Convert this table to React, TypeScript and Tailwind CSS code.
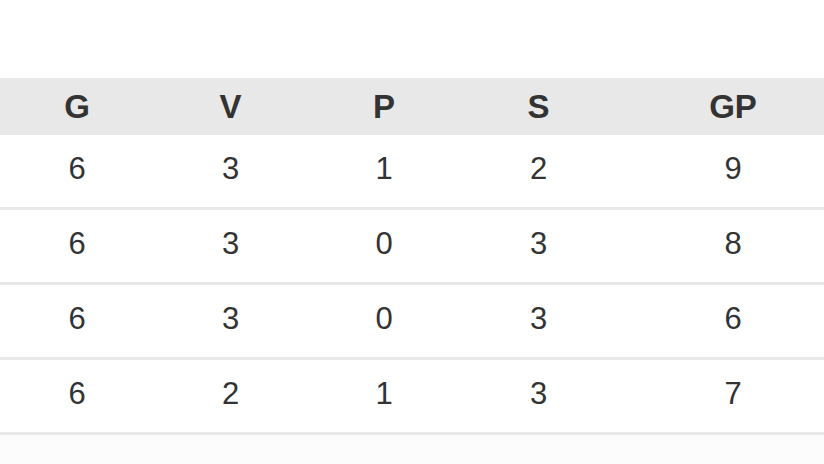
import React from "react";

const rows = [
  ["6", "3", "1", "2", "9"],
  ["6", "3", "0", "3", "8"],
  ["6", "3", "0", "3", "6"],
  ["6", "2", "1", "3", "7"],
];
const heads = ["G", "V", "P", "S", "GP"];

function Row({ cells, head }: { cells: string[]; head?: boolean }) {
  return (
    <div
      className={
        head
          ? "grid grid-cols-[154px_153px_154px_155px_234px] h-[57px] items-center bg-[#e8e8e8] font-bold text-[33px] pb-[1px]"
          : "grid grid-cols-[154px_153px_154px_155px_234px] h-[75px] items-center border-b-[3px] border-[#e8e8e8] bg-white pb-[6px] text-[31px]"
      }
    >
      {cells.map((c, i) => (
        <div key={i} className="text-center">
          {c}
        </div>
      ))}
    </div>
  );
}

export default function App() {
  return (
    <div
      className="w-[824px] h-[464px] overflow-hidden bg-[#fcfcfc] text-[#333333] leading-none"
      style={{ fontFamily: '"Liberation Sans", Arial, sans-serif' }}
    >
      <div className="h-[78px] bg-white" />
      <div className="w-[850px]">
        <Row cells={heads} head />
        {rows.map((r, i) => (
          <Row key={i} cells={r} />
        ))}
      </div>
    </div>
  );
}
